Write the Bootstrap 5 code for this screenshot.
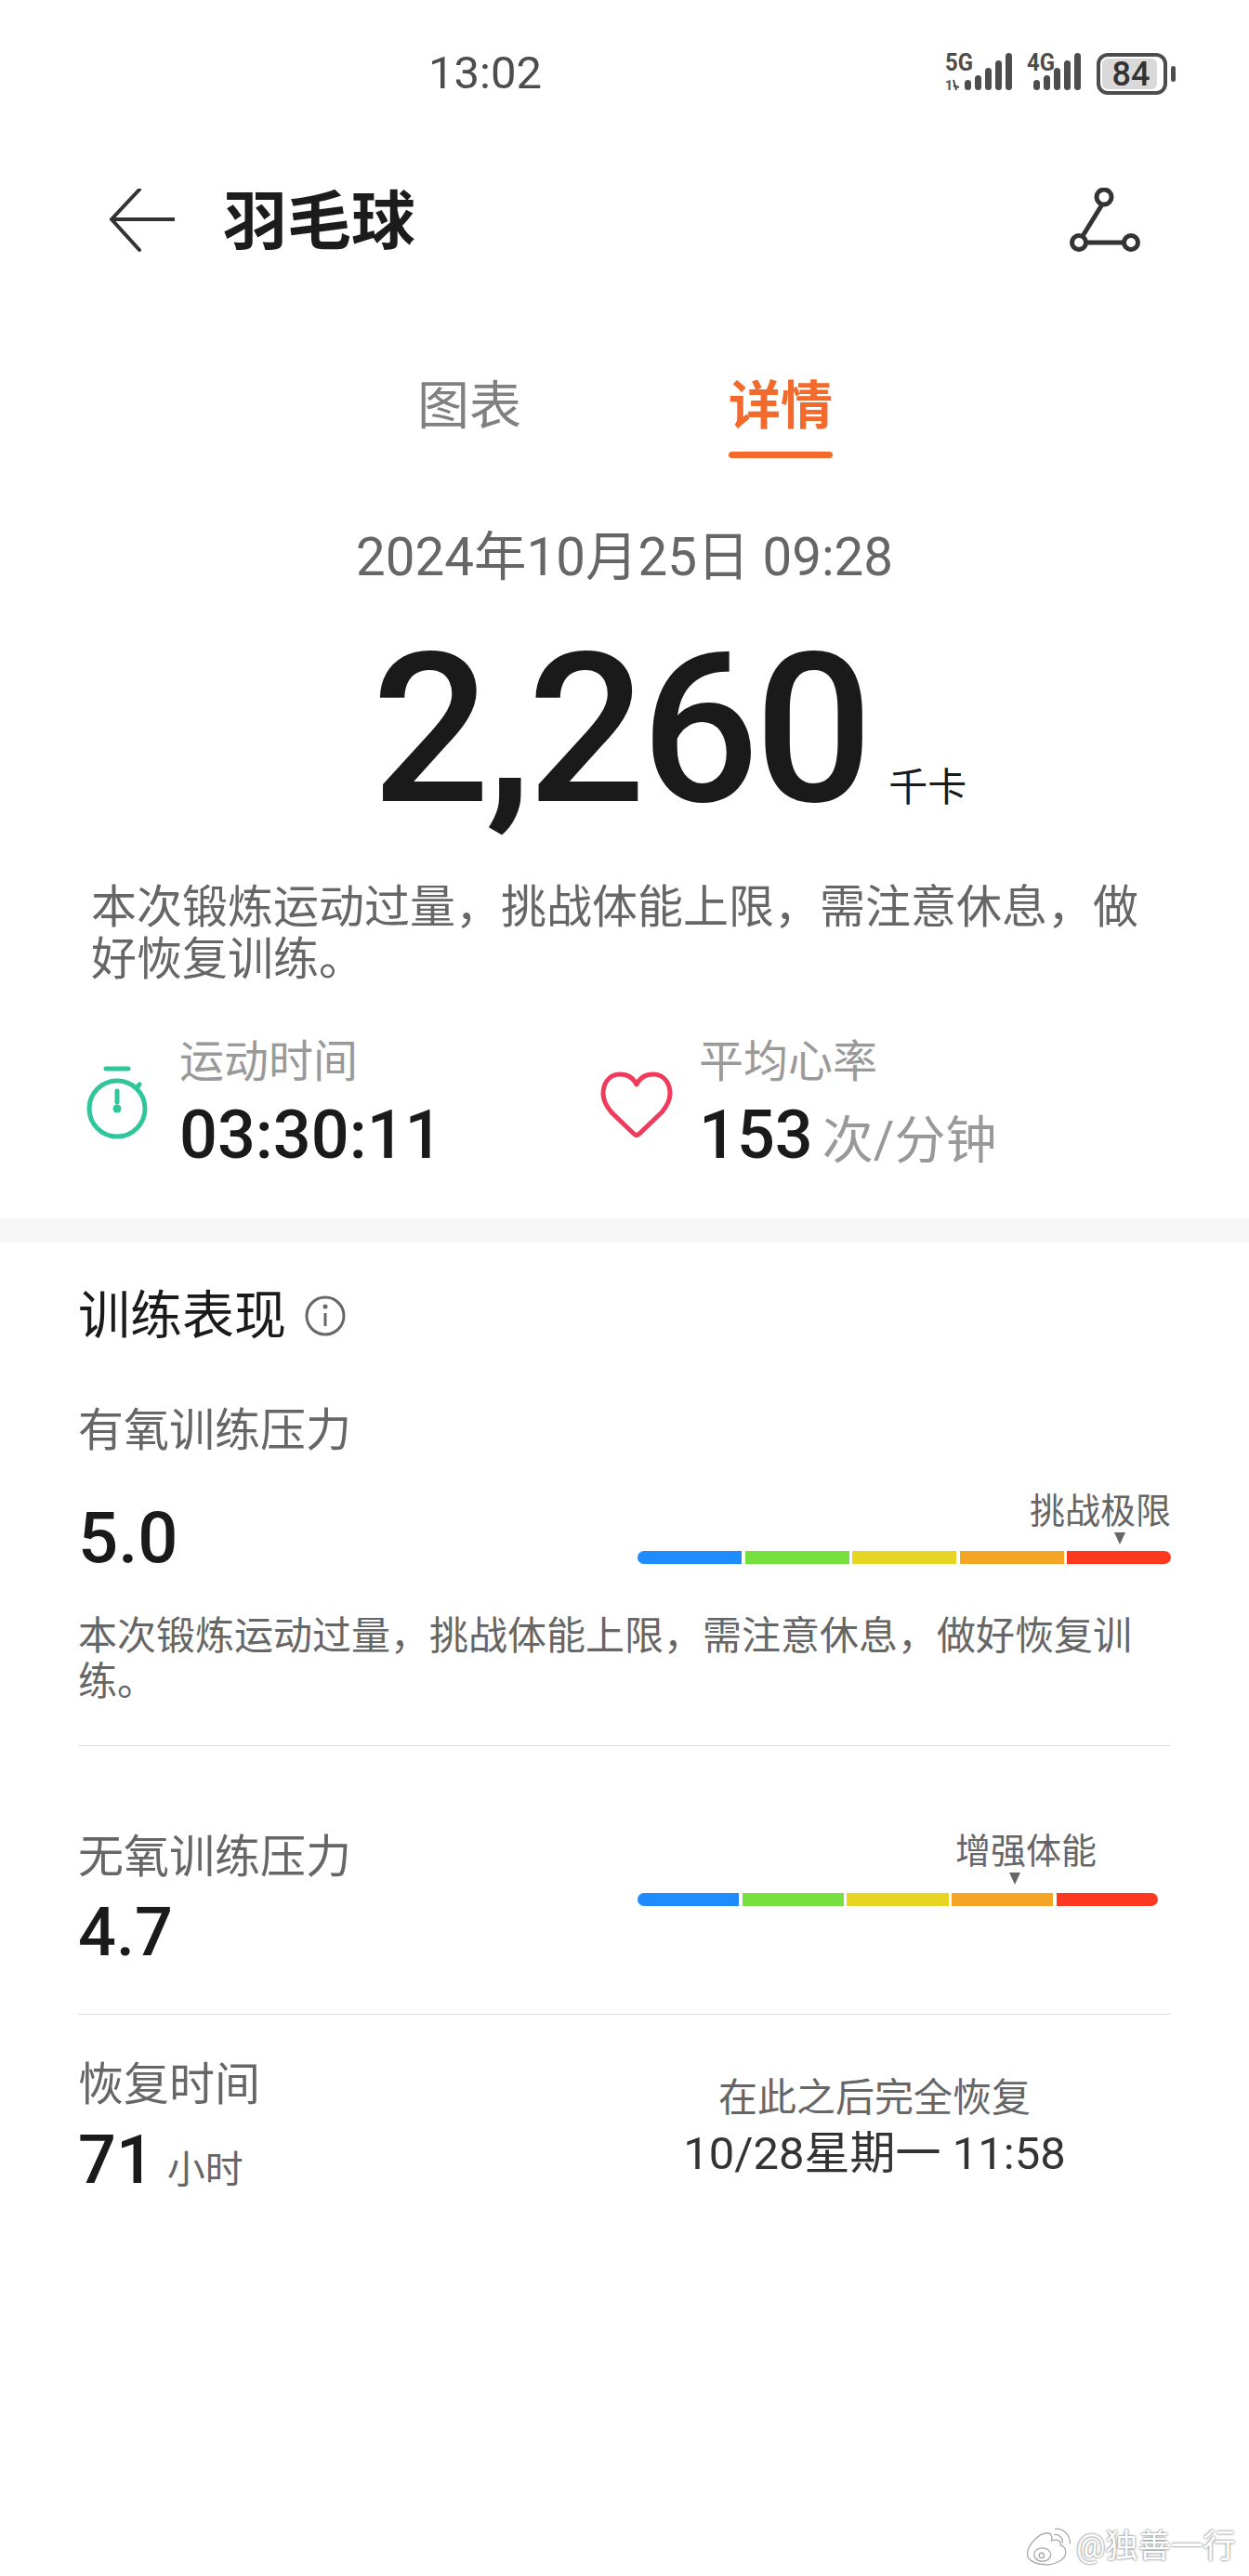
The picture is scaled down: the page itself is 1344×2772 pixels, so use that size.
<!DOCTYPE html>
<html lang="zh">
<head>
<meta charset="utf-8">
<title>羽毛球</title>
<link href="https://cdn.jsdelivr.net/npm/bootstrap@5.3.0/dist/css/bootstrap.min.css" rel="stylesheet">
<style>
body{width:1344px;height:2772px;background:#fff;font-family:Roboto,"Noto Sans CJK SC",sans-serif;color:#1a1a1a;position:relative;overflow:hidden}
.sbar{height:156px;padding:2px 77px 0 461px}
.sbar-time{font-size:49px;line-height:60px;color:#4d4d4d}
.hdr{height:162px;padding:0 114px 0 118px}
.hdr-title{font-size:69px;line-height:80px;font-weight:700;margin-left:52px;color:#1c1c1c;padding-top:5px}
.tabs{margin-top:84px;padding-left:449px}
.tab-item{width:335px}
.tab-text{font-size:56px;line-height:70px;color:#808080}
.tab-on{color:#f26a2c;font-weight:700}
.tab-line{width:112px;height:7px;border-radius:4px;background:#f26a2c;margin-top:14px}
.date-line{margin-top:72px;font-size:56.500px;line-height:70px;color:#666;text-align:center}
.kcal{margin-top:36px;padding-left:400px;height:230px}
.kcal-num{font-size:224px;font-weight:500;line-height:230px;color:#1a1a1a;letter-spacing:-5px}
.kcal-unit{font-size:42px;line-height:50px;color:#1a1a1a;margin-left:22px}
.sum{margin:48px 98px 0;font-size:49px;line-height:56px;color:#666}
.stats{margin-top:52px;height:198px}
.stat-a{width:646px;padding-left:92px}
.stat-ic{width:68px;margin-right:33px;padding-top:33px}
.stat-ic-heart{width:78px;margin-right:28px;padding-top:40px}
.stat-label{font-size:48px;line-height:60px;color:#999}
.stat-val{font-size:72px;line-height:80px;font-weight:500;margin-top:9px}
.stat-unit{font-size:55px;font-weight:400;color:#999;margin-left:10px}
.gap-band{height:26px;background:#f6f6f6}
.perf{padding:0 84px}
.perf-title{margin-top:49px;font-size:56px;line-height:60px;color:#1a1a1a}
.perf-info{margin-left:20px}
.m-label{font-size:49px;line-height:60px;color:#666}
.m-val{font-size:72px;line-height:80px;font-weight:500}
.m-val-big{font-size:76px}
.meter{width:574px;flex:none}
.meter-label{font-size:38px;line-height:46px;color:#666}
.meter-tip{width:0;height:0;border-left:6px solid transparent;border-right:6px solid transparent;border-top:13px solid #666}
.seg-row{display:flex;gap:3.5px;height:14px}
.seg{flex:1}
.seg-first{border-radius:7px 0 0 7px}
.seg-last{border-radius:0 7px 7px 0}
.c-blue{background:#1e8bff}.c-green{background:#76e03f}.c-yellow{background:#e6d522}.c-orange{background:#f5a525}.c-red{background:#ff3820}
.m-desc{margin-top:41px;font-size:42px;line-height:49px;color:#666}
.rule{height:1px;background:#ddd}
.rec-unit{font-size:41px;font-weight:400;color:#666;margin-left:14px}
.rec-side{width:510px;text-align:center}
.rec-a{font-size:42px;line-height:50px;color:#666;margin-top:19px}
.rec-b{font-size:49px;line-height:60px;color:#333;margin-top:5px}
.wm{position:absolute;left:1102px;top:2716px;color:#fff;font-size:35px;line-height:50px;white-space:nowrap;text-shadow:0 0 3px #888,0 0 2px #999}
</style>
</head>
<body>
<div class="sbar d-flex align-items-center justify-content-between">
  <span class="sbar-time">13:02</span>
  <svg width="250" height="62" viewBox="0 -8 250 62" fill="#4d4d4d">
    <text x="0" y="20" font-family="Roboto,sans-serif" font-size="26" font-weight="700" textLength="30" lengthAdjust="spacingAndGlyphs">5G</text>
    <text x="0" y="41" font-family="Roboto,sans-serif" font-size="14" font-weight="700">1</text>
    <path d="M9 30l3 11M9 36l6 2" stroke="#4d4d4d" stroke-width="2" fill="none"/>
    <rect x="21" y="30" width="7" height="11" rx="3.5"/><rect x="32" y="25" width="7" height="16" rx="3.5"/><rect x="43" y="17" width="7" height="24" rx="3.5"/><rect x="54" y="9" width="7" height="32" rx="3.5"/><rect x="65" y="1" width="7" height="40" rx="3.5"/>
    <text x="88" y="20" font-family="Roboto,sans-serif" font-size="26" font-weight="700" textLength="30" lengthAdjust="spacingAndGlyphs">4G</text>
    <rect x="95" y="30" width="7" height="11" rx="3.5"/><rect x="106" y="25" width="7" height="16" rx="3.5"/><rect x="117" y="17" width="7" height="24" rx="3.5"/><rect x="128" y="9" width="7" height="32" rx="3.5"/><rect x="139" y="1" width="7" height="40" rx="3.5"/>
    <rect x="165" y="3" width="72" height="41" rx="10" fill="#fff" stroke="#4d4d4d" stroke-width="4"/>
    <rect x="169" y="7" width="59" height="33" rx="6" fill="#d9d9d9"/>
    <rect x="243" y="15" width="5" height="17" rx="2.5"/>
    <text x="200" y="36" text-anchor="middle" font-family="Roboto,sans-serif" font-size="36" font-weight="500" fill="#333">84</text>
  </svg>
</div>
<div class="hdr d-flex align-items-center">
  <svg width="70" height="68" viewBox="0 0 70 68" fill="none" stroke="#333" stroke-width="4" stroke-linecap="round"><path d="M69 33H4M32 1 2 33l30 33"/></svg>
  <span class="hdr-title flex-grow-1">羽毛球</span>
  <svg width="80" height="70" viewBox="0 0 80 70" fill="none" stroke="#333" stroke-width="5"><circle cx="38" cy="10" r="8"/><circle cx="11" cy="59" r="7.500"/><circle cx="67" cy="59" r="7.500"/><path d="M36 18 15 52M19 59h40"/></svg>
</div>
<div class="tabs d-flex">
  <div class="tab-item"><div class="tab-text">图表</div></div>
  <div class="tab-item"><div class="tab-text tab-on">详情</div><div class="tab-line"></div></div>
</div>
<div class="date-line">2024年10月25日 09:28</div>
<div class="kcal d-flex align-items-baseline"><span class="kcal-num">2,260</span><span class="kcal-unit">千卡</span></div>
<p class="sum mb-0">本次锻炼运动过量，挑战体能上限，需注意休息，做好恢复训练。</p>
<div class="stats d-flex">
  <div class="stat-a d-flex">
    <div class="stat-ic"><svg width="68" height="82" viewBox="0 0 68 82" fill="none" stroke="#2fc69b" stroke-width="5"><path d="M22 4h24" stroke-linecap="round"/><circle cx="34" cy="47" r="30"/><path d="M55 25l3-4" stroke-linecap="round"/><path d="M34 28v12" stroke-linecap="round"/><circle cx="34" cy="47" r="4.500" fill="#2fc69b" stroke="none"/></svg></div>
    <div><div class="stat-label">运动时间</div><div class="stat-val">03:30:11</div></div>
  </div>
  <div class="d-flex">
    <div class="stat-ic-heart"><svg width="78" height="72" viewBox="0 0 78 72" fill="none" stroke="#ef3b5c" stroke-width="5" stroke-linejoin="round"><path d="M39 14C35 6 28 3 21 3 10 3 3 12 3 24 3 32 7 38 12 44L36 67Q39 70 42 67L66 44C71 38 75 32 75 24 75 12 68 3 57 3 50 3 43 6 39 14Z"/></svg></div>
    <div><div class="stat-label">平均心率</div><div class="stat-val">153<span class="stat-unit">次/分钟</span></div></div>
  </div>
</div>
<div class="gap-band"></div>
<div class="perf">
  <div class="perf-title d-flex align-items-center">训练表现<svg class="perf-info" width="44" height="44" viewBox="0 0 44 44" fill="none" stroke="#666" stroke-width="3"><circle cx="22" cy="22" r="20"/><path d="M22 19v14"/><circle cx="22" cy="12" r="2.500" fill="#666" stroke="none"/></svg></div>
  <div class="m-label" style="margin-top:64px">有氧训练压力</div>
  <div class="d-flex justify-content-between" style="margin-top:30px;height:95px">
    <div class="m-val m-val-big" style="margin-top:15px">5.0</div>
    <div class="meter" style="padding-top:3px">
      <div class="meter-label text-end">挑战极限</div>
      <div class="meter-tip" style="margin-left:89.400%"></div>
      <div class="seg-row" style="margin-top:7px"><span class="seg seg-first c-blue"></span><span class="seg c-green"></span><span class="seg c-yellow"></span><span class="seg c-orange"></span><span class="seg seg-last c-red"></span></div>
    </div>
  </div>
  <p class="m-desc mb-0">本次锻炼运动过量，挑战体能上限，需注意休息，做好恢复训练。</p>
  <div class="rule" style="margin-top:44px"></div>
  <div class="d-flex justify-content-between" style="margin-top:90px">
    <div>
      <div class="m-label">无氧训练压力</div>
      <div class="m-val" style="margin-top:11px">4.7</div>
    </div>
    <div class="meter" style="padding-right:14px">
      <div class="meter-label" style="padding-left:342px">增强体能</div>
      <div class="meter-tip" style="margin-left:71.500%"></div>
      <div class="seg-row" style="margin-top:9px"><span class="seg seg-first c-blue"></span><span class="seg c-green"></span><span class="seg c-yellow"></span><span class="seg c-orange"></span><span class="seg seg-last c-red"></span></div>
    </div>
  </div>
  <div class="rule" style="margin-top:47px"></div>
  <div class="d-flex" style="margin-top:46px">
    <div style="width:602px">
      <div class="m-label">恢复时间</div>
      <div class="m-val" style="margin-top:11px">71<span class="rec-unit">小时</span></div>
    </div>
    <div class="rec-side">
      <div class="rec-a">在此之后完全恢复</div>
      <div class="rec-b">10/28星期一 11:58</div>
    </div>
  </div>
</div>
<div class="wm d-flex align-items-center">
  <svg width="52" height="42" viewBox="0 0 58 46" fill="#fff" stroke="#aaa" stroke-width="1.500"><path d="M4 31C4 20 18 6 28 6c5 0 6 5 5 9 7-2 12 0 11 6 4 1 6 4 6 8 0 8-11 15-23 15C14 44 4 39 4 31z"/><ellipse cx="22" cy="32" rx="10" ry="8"/><circle cx="21" cy="33" r="3"/><path d="M36 8c6-1 11 4 10 10M37 1c10-1 19 8 18 18" fill="none"/></svg>
  <span class="ms-1">@独善一行</span>
</div>
</body>
</html>
